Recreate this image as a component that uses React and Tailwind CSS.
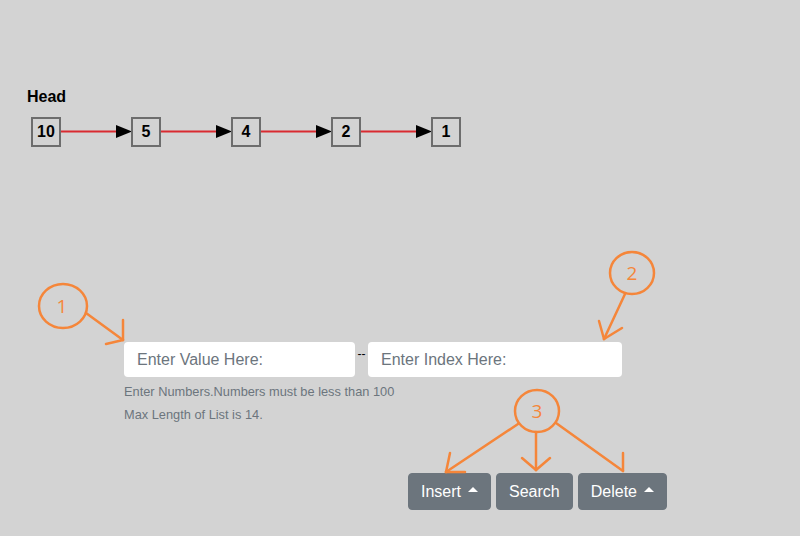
import React from "react";

const nodes = [10, 5, 4, 2, 1];

function Connector() {
  return (
    <svg width="70" height="30" viewBox="0 0 70 30" className="block overflow-visible shrink-0">
      <line x1="0" y1="14.5" x2="57" y2="14.5" stroke="#d92a30" strokeWidth="2" />
      <polygon points="55,8 71,14.5 55,21" fill="#000" />
    </svg>
  );
}

function Caret() {
  return (
    <span className="inline-block ml-[7px] align-middle w-0 h-0 border-l-[5px] border-r-[5px] border-b-[5px] border-l-transparent border-r-transparent border-b-white relative top-[-2px]" />
  );
}

function Annotations() {
  const c = "#f5863a";
  return (
    <svg
      width="800"
      height="536"
      viewBox="0 0 800 536"
      className="absolute left-0 top-0 pointer-events-none"
      fill="none"
      stroke={c}
      strokeWidth="2.5"
      strokeLinecap="round"
    >
      <ellipse cx="63" cy="306" rx="24" ry="22" />
      <text x="62" y="313" fill={c} stroke="none" fontSize="19" textAnchor="middle" fontFamily="'Open Sans', 'Liberation Sans', sans-serif">1</text>
      <line x1="86" y1="313" x2="123" y2="340" />
      <line x1="123" y1="340" x2="123" y2="320" />
      <line x1="123" y1="340" x2="106" y2="344" />

      <ellipse cx="632" cy="273" rx="22" ry="21" />
      <text x="632" y="280" fill={c} stroke="none" fontSize="19" textAnchor="middle" fontFamily="'Open Sans', 'Liberation Sans', sans-serif">2</text>
      <line x1="625" y1="294" x2="604" y2="339" />
      <line x1="604" y1="339" x2="622" y2="328" />
      <line x1="604" y1="339" x2="599" y2="321" />

      <ellipse cx="537" cy="411" rx="22" ry="21" />
      <text x="537" y="418" fill={c} stroke="none" fontSize="19" textAnchor="middle" fontFamily="'Open Sans', 'Liberation Sans', sans-serif">3</text>
      <line x1="518" y1="424" x2="446" y2="472" />
      <line x1="446" y1="472" x2="450" y2="453" />
      <line x1="446" y1="472" x2="465" y2="472" />
      <line x1="536" y1="432" x2="536" y2="470" />
      <line x1="536" y1="470" x2="522" y2="458" />
      <line x1="536" y1="470" x2="550" y2="458" />
      <line x1="556" y1="423" x2="623" y2="471" />
      <line x1="623" y1="471" x2="623" y2="453" />
    </svg>
  );
}

export default function App() {
  return (
    <div className="relative w-[800px] h-[536px] overflow-hidden bg-[#d3d3d3] font-['Liberation_Sans',Arial,sans-serif] text-black">
      <div className="pt-[87px] pl-[27px] text-[16px] font-bold leading-[20px]">Head</div>
      <div className="mt-[10px] pl-[31px] flex items-center">
        {nodes.map((n, i) => (
          <React.Fragment key={i}>
            <div className="w-[30px] h-[30px] border-2 border-[#6d6d6d] flex items-center justify-center text-[16px] font-bold leading-none">
              {n}
            </div>
            {i < nodes.length - 1 && <Connector />}
          </React.Fragment>
        ))}
      </div>

      <div className="mt-[195px] pl-[124px] flex items-start">
        <div className="w-[231px] h-[35px] bg-white rounded-[4px] flex items-center pl-[13px] text-[16px] text-[#6c757d]">
          Enter Value Here:
        </div>
        <div className="w-[13px] text-center text-[12px] leading-none mt-[6px] text-black">--</div>
        <div className="w-[254px] h-[35px] bg-white rounded-[4px] flex items-center pl-[13px] text-[16px] text-[#6c757d]">
          Enter Index Here:
        </div>
      </div>
      <div className="mt-[3px] pl-[124px] text-[12.8px] leading-[23px] text-[#6c757d]">
        <div>Enter Numbers.Numbers must be less than 100</div>
        <div>Max Length of List is 14.</div>
      </div>

      <div className="mt-[47px] pl-[408px] flex items-start gap-[5px]">
        <button className="bg-[#6c757d] text-white text-[16px] leading-[23px] py-[6px] px-[12px] border border-[#6c757d] rounded-[4px] flex items-center">
          Insert
          <Caret />
        </button>
        <button className="bg-[#6c757d] text-white text-[16px] leading-[23px] py-[6px] px-[12px] border border-[#6c757d] rounded-[4px]">
          Search
        </button>
        <button className="bg-[#6c757d] text-white text-[16px] leading-[23px] py-[6px] px-[12px] border border-[#6c757d] rounded-[4px] flex items-center">
          Delete
          <Caret />
        </button>
      </div>

      <Annotations />
    </div>
  );
}
